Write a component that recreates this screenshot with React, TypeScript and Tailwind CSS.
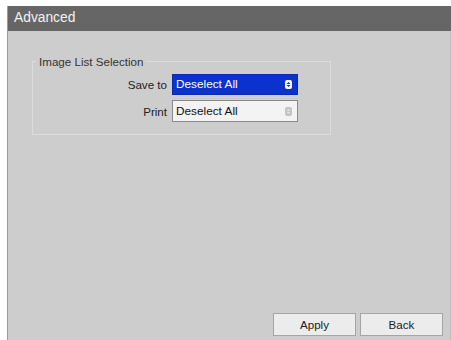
import React from "react";

function SpinIcon({ active }: { active: boolean }) {
  return (
    <span
      className={
        active
          ? "flex h-[9px] w-[7px] flex-col items-center justify-center gap-[1px] rounded-[2px] bg-white"
          : "flex h-[9px] w-[7px] flex-col items-center justify-center gap-[1px] rounded-[2px] bg-[#c4c4c4]"
      }
    >
      <svg width="5" height="7" viewBox="0 0 5 7">
        <path d="M0.5 3 L2.5 1 L4.5 3 Z" fill={active ? "#0b31cf" : "#e2e2e2"} />
        <path d="M0.5 4 L2.5 6 L4.5 4 Z" fill={active ? "#0b31cf" : "#e2e2e2"} />
      </svg>
    </span>
  );
}

function Row({ label, active }: { label: string; active: boolean }) {
  return (
    <div className="flex items-center">
      <span className="w-[134px] text-right text-[11.6px] text-[#222]">{label}</span>
      <div
        className={
          active
            ? "ml-[5px] flex h-[21px] w-[126px] items-center justify-between border border-[#0a2aa8] bg-[#0b31cf] pl-[3px] pr-[5px] text-[11.8px] text-white"
            : "ml-[5px] flex h-[22px] w-[126px] items-center justify-between border border-[#8a8a8a] bg-[#f3f3f3] pl-[3px] pr-[5px] text-[11.8px] text-[#111]"
        }
      >
        <span>Deselect All</span>
        <SpinIcon active={active} />
      </div>
    </div>
  );
}

export default function App() {
  return (
    <div
      className="flex h-[340px] w-[451px] flex-col bg-white pl-[7px] pt-[6px]"
      style={{ fontFamily: '"Liberation Sans", Arial, sans-serif' }}
    >
      <div className="flex flex-1 flex-col border-l border-[#9a9a9a]">
        <div className="flex h-[25px] items-center bg-[#666666] px-[6px] text-[13.8px] text-[#f2f2f2]">
          Advanced
        </div>
        <div className="flex flex-1 flex-col border-r border-[#bdbdbd] bg-[#cdcdcd] pl-[24px] pr-[7px] pt-[22px] pb-[4px]">
          <fieldset className="w-[299px] border border-[#dcdcdc] pb-[12px]">
            <legend className="ml-[3px] px-[3px] text-[11.6px] text-[#333]">Image List Selection</legend>
            <div className="flex flex-col gap-[5px] pt-[4px]">
              <Row label="Save to" active />
              <Row label="Print" active={false} />
            </div>
          </fieldset>
          <div className="flex-1" />
          <div className="flex justify-end gap-[4px]">
            <button className="h-[23px] w-[83px] border border-[#a5a5a5] bg-[#ececec] text-[11.6px] text-[#222]">
              Apply
            </button>
            <button className="h-[23px] w-[83px] border border-[#a5a5a5] bg-[#ececec] text-[11.6px] text-[#222]">
              Back
            </button>
          </div>
        </div>
      </div>
    </div>
  );
}
